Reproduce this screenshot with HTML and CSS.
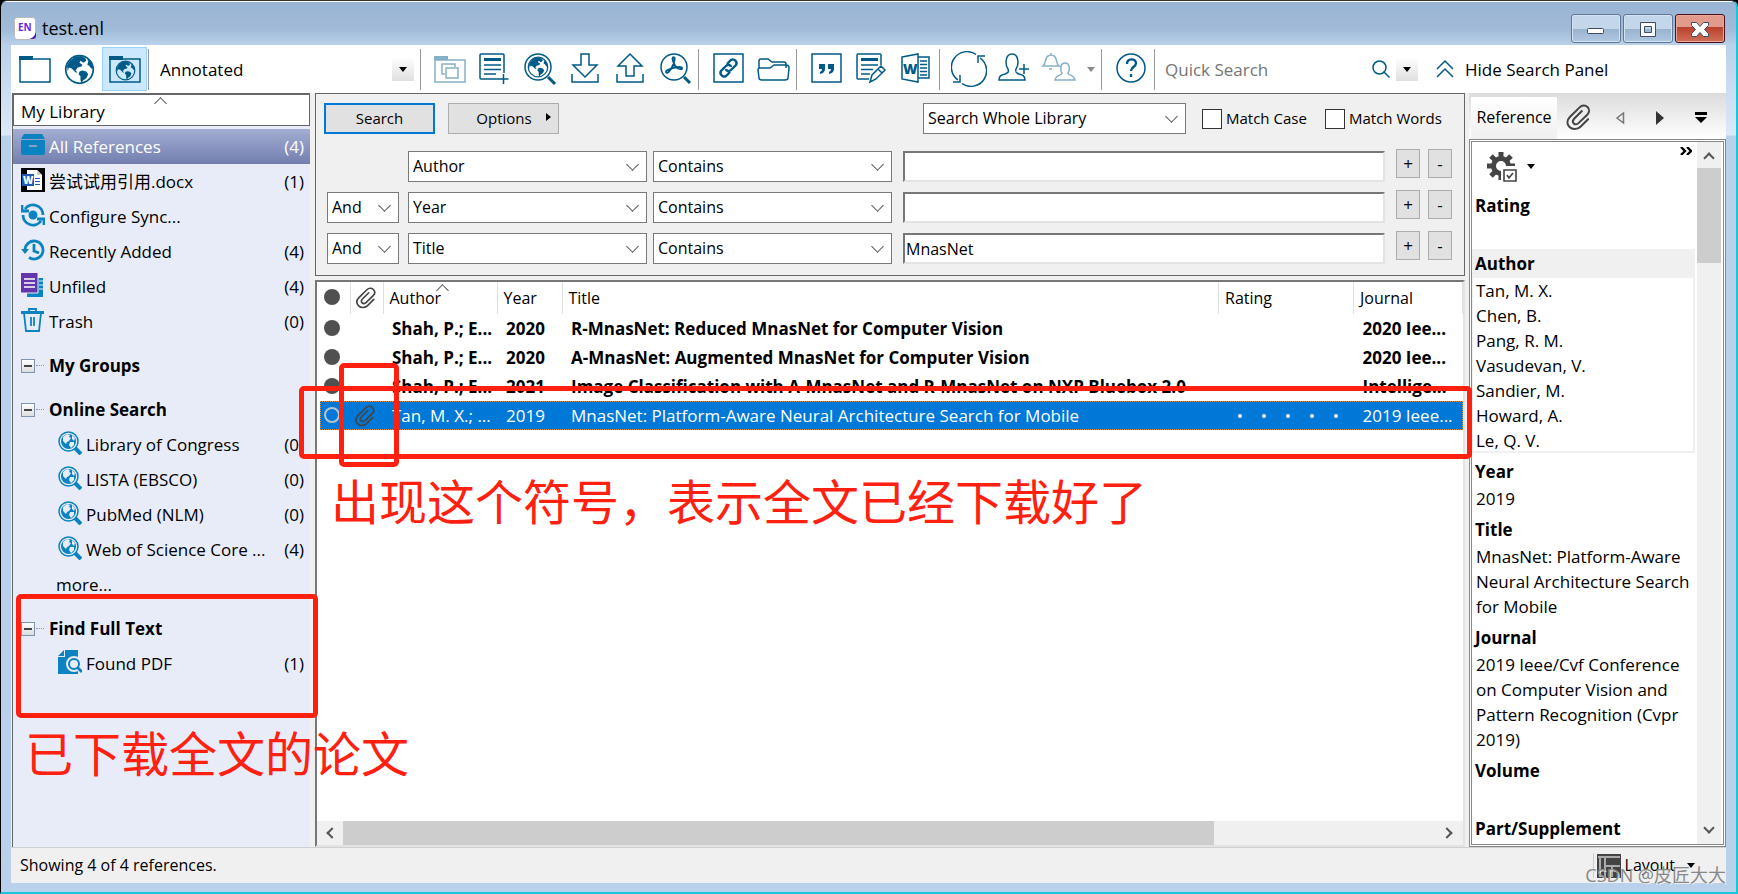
FILE: index.html
```html
<!DOCTYPE html>
<html lang="en">
<head>
    <meta charset="UTF-8">
    <meta name="viewport" content="width=device-width, initial-scale=1.0">
    <title>test.enl</title>
    <link rel="stylesheet" href="styles.css">
</head>
<body>
    <!-- shared icons -->
    <svg class="defs" aria-hidden="true">
        <symbol id="globe" viewBox="0 0 32 32">
            <circle cx="16" cy="16" r="14.2" fill="none" stroke="currentColor" stroke-width="1.8"/>
            <path fill="currentColor" d="M3 12 6 7l5-4 6-1 5 2 1 3-3 2-3-2-1 2 3 2-1 2-4 1-2 3 2 2-2 0-4-4-3-1-1 4zM16 18l3-1 4 1 2 3-2 4-3 2-2 3-1-3 0-4-2-2zM24 5l4 4 2 6-2 0-2-3-2-1 1-3z"/>
        </symbol>
        <symbol id="clip" viewBox="0 0 24 24">
            <path fill="none" stroke="currentColor" stroke-width="1.8" stroke-linecap="round" d="M20.5 13.5 14 20c-3 3-7.5 3-10 .5s-2.5-6 .3-9L13 3c2-2 5-2.300 7-.3s1.800 4.800-.2 6.800L12 17c-1.300 1.300-3 1.500-4.200.3s-1-2.800.3-4.200L15 6.300"/>
        </symbol>
        <symbol id="search-globe" viewBox="0 0 24 24">
            <circle cx="10.500" cy="10.500" r="9.500" fill="none" stroke="currentColor" stroke-width="1.500"/>
            <circle cx="10.500" cy="10.500" r="7.500" fill="currentColor"/>
            <path fill="#e8ecf8" d="M5 6l4-3 3 1-1 2 2 1-2 3-2 1-1 2-3-3zM12 11l4 0 0 3-3 3-2-3zM14 4l3 3-1 3-2-2z"/>
            <path stroke="currentColor" stroke-width="4" d="M17 17l6 6"/>
        </symbol>
    </svg>

    <div class="window">
        <header class="titlebar">
            <svg class="app-icon" viewBox="0 0 22 23">
                <rect x=".5" y=".5" width="21" height="22" rx="3" fill="#fff" stroke="#bbb"/>
                <path d="M22 15v4q0 3-3 3h-4q5-1 7-7" fill="#4a1fb0"/>
                <text x="4" y="14" class="app-icon-text">EN</text>
            </svg>
            <h1>test.enl</h1>
            <div class="window-buttons">
                <button class="win-btn" aria-label="Minimize"><svg viewBox="0 0 48 26"><rect x="15.500" y="12.500" width="16" height="5" rx="1" fill="#fff" stroke="#3f4d63"/></svg></button>
                <button class="win-btn" aria-label="Maximize"><svg viewBox="0 0 48 26"><path fill="#fff" fill-rule="evenodd" stroke="#3f4d63" d="M16.500 6.500h15v14h-15zM20.500 10.500h7v6h-7z"/></svg></button>
                <button class="win-btn close" aria-label="Close"><svg viewBox="0 0 48 26"><path fill="#fff" stroke="#3f4d63" stroke-linejoin="round" d="M15.500 6.500h5l3.500 4 3.500-4h5v3L28.500 13.500l4 4v3h-5l-3.500-4-3.500 4h-5v-3l4-4-4-4z"/></svg></button>
            </div>
        </header>

        <div class="client">
            <nav class="toolbar">
                <button class="tool" aria-label="Local library"><svg viewBox="0 0 36 36"><path class="line" d="M3 31V8h30v23z"/><path d="M2 5h14v4H2z"/></svg></button>
                <button class="tool" aria-label="Online search"><svg class="globe" viewBox="0 0 32 32"><use href="#globe"/></svg></button>
                <button class="tool active" aria-label="Integrated library"><svg viewBox="0 0 36 36"><path class="line" d="M3 31V8h30v23z"/><path d="M2 5h14v4H2z"/><use href="#globe" x="8" y="9" width="21" height="21"/></svg></button>
                <span class="sep"></span>
                <span class="combo style-combo">Annotated<button class="drop" aria-label="Choose style"></button></span>
                <span class="sep"></span>
                <button class="tool dim" aria-label="New group"><svg viewBox="0 0 36 36"><path class="line" d="M3 31V9h30v22z"/><path d="M2 5h14v4H2z"/><path class="line" d="M13 23h-3V13h13v3M14 17h12v10H14z"/></svg></button>
                <button class="tool" aria-label="New reference"><svg viewBox="0 0 36 36"><path class="line" d="M22 28H4q-1 0-1-1V4q0-1 1-1h22q1 0 1 1v18M7 14h17M7 18.500h17M7 23h12M26.500 23v10M21.500 28h10"/><path d="M7 7h17v3H7z"/></svg></button>
                <button class="tool" aria-label="Search online"><svg viewBox="0 0 36 36"><circle class="line" cx="16" cy="16" r="13"/><use href="#globe" x="5" y="5" width="22" height="22"/><path class="thick" d="M26 26l7 7"/></svg></button>
                <button class="tool" aria-label="Import"><svg viewBox="0 0 36 36"><path class="line" d="M14 3h8v11h8L18 26 6 14h8zM5 23v8h26v-8"/></svg></button>
                <button class="tool" aria-label="Export"><svg viewBox="0 0 36 36"><path class="line" d="M18 3l12 12h-8v10h-8V15H6zM5 23v8h26v-8"/></svg></button>
                <button class="tool" aria-label="Find full text"><svg viewBox="0 0 36 36"><circle class="line" cx="17" cy="16" r="13"/><path class="thick" d="M27 26l6 6"/><path class="line mid" d="M15.500 8c0-3 3-2 2 1-1 5-3 9-6 12-2 2-4 0-1-2 4-2 8-3 12-3 4 0 3 3 0 2-4-1-6-5-7-10"/></svg></button>
                <span class="sep"></span>
                <button class="tool" aria-label="Open link"><svg viewBox="0 0 36 36"><path class="line" d="M4 3h29v28H4z"/><path class="line bold" d="M17 13l4-4c3-2 7 2 5 5l-5 5c-2 2-5 1-5-1M20 21l-4 4c-3 2-7-2-5-5l5-5c2-2 5-1 5 1"/></svg></button>
                <button class="tool" aria-label="Open file"><svg viewBox="0 0 36 36"><path class="line" d="M4 17V10q0-2 2-2h7l4 3h12q2 0 2 2v4M5 17h10l4-3h12q3 0 3 3l-1 10q0 2-3 2H7q-3 0-3-2L3 19q0-2 2-2z"/></svg></button>
                <span class="sep"></span>
                <button class="tool" aria-label="Insert citation"><svg viewBox="0 0 36 36"><path class="line" d="M4 3h29v28H4z"/><path d="M11 13h6v5q0 4-5 5v-2q2-1 2-3h-3zM20 13h6v5q0 4-5 5v-2q2-1 2-3h-3z"/></svg></button>
                <button class="tool" aria-label="Format bibliography"><svg viewBox="0 0 36 36"><path class="line" d="M16 28H5q-1 0-1-1V4q0-1 1-1h22q1 0 1 1v10M8 14h17M8 18.500h12M8 23h9M17 31l2-7L28 15l4 4-9 9zM25 18l4 4"/><path d="M8 7h17v3H8z"/></svg></button>
                <button class="tool" aria-label="Go to Word"><svg viewBox="0 0 36 36"><path class="line" d="M4 6l16-3v28L4 28zM20 6h11v21H20M22 10h7M22 13.500h7M22 17h7M22 20.500h7M22 24h7"/><text x="5" y="23" class="word-letter">W</text></svg></button>
                <span class="sep"></span>
                <button class="tool" aria-label="Sync"><svg viewBox="0 0 36 36"><path class="line" d="M7 29A15.500 15.500 0 0 1 25 3.500M29 7A15.500 15.500 0 0 1 11 32.500M34 5h-7v7M2 31h7v-7"/></svg></button>
                <button class="tool" aria-label="Share library"><svg viewBox="0 0 36 36"><path class="line" d="M12 18C9 14 9 3 16 3s7 11 4 15c-1 3 0 4 3 5 4 1 6 2 6 6H3c0-4 2-5 6-6 3-1 4-2 3-5zM28 13v10M23 18h10"/></svg></button>
                <button class="tool dim" aria-label="Activity feed"><svg viewBox="0 0 36 36"><path class="line" d="M2 15c3-2 2-9 5-10 2-1 5-1 6 0 3 1 2 8 5 10zM8 18h3M10 4V2M21 22c-2-3-2-10 3-10s5 7 3 10c0 3 6 1 7 7H14c1-6 7-4 7-7z"/></svg></button>
                <span class="tool-arrow"></span>
                <span class="sep"></span>
                <button class="tool" aria-label="Help"><svg viewBox="0 0 36 36"><circle class="line" cx="18" cy="17" r="14"/><path class="line bold" d="M14 13c0-6 9-6 9-1 0 4-5 4-5 8M18 23v3"/></svg></button>
                <span class="sep"></span>
                <div class="quick">
                    <input type="text" placeholder="Quick Search" aria-label="Quick Search">
                    <svg class="lens" viewBox="0 0 18 18"><path class="line" d="M11.500 11.500l6 6"/><circle class="line" cx="7.500" cy="7.500" r="6.500"/></svg>
                    <button class="drop" aria-label="Search options"></button>
                </div>
                <button class="hide-panel"><svg viewBox="0 0 18 18"><path class="line" d="M1 9l8-8 8 8M1 17l8-8 8 8"/></svg>Hide Search Panel</button>
            </nav>

            <main class="main">
                <aside class="sidebar">
                    <div class="side-head">My Library</div>
                    <ul class="groups">
                        <li class="selected"><svg viewBox="0 0 24 24"><path d="M3 1h18l3 5H0zM0 7h24v13q0 2-2 2H2q-2 0-2-2z"/><path d="M8 13h8" stroke="#8d9bc5" stroke-width="2"/></svg><span class="name">All References</span><span>(4)</span></li>
                        <li><svg viewBox="0 0 24 24"><path fill="#000" d="M0 0h24v24H0z"/><path fill="#fff" d="M6 2h10l5 5v15H6z"/><path fill="#ccc" d="M16 2v5h5z"/><path fill="#1f5bb5" d="M1 6h12v12H1zM14 10h5v1h-5zM14 13h5v1h-5zM14 16h5v1h-5z"/><text x="2" y="16" class="doc-letter">W</text></svg><span class="name">尝试试用引用.docx</span><span>(1)</span></li>
                        <li><svg viewBox="0 0 24 24"><circle cx="12" cy="12" r="4.500"/><path class="ring" d="M4 6A10 10 0 0 1 22 12M20 18A10 10 0 0 1 2 12M1 2v6h7M23 22v-6h-7"/></svg><span class="name">Configure Sync...</span></li>
                        <li><svg viewBox="0 0 24 24"><path class="ring" d="M4 12a9 9 0 1 1 4 7.500M13 6v7l5 2"/><path d="M0 11h8l-4 5z"/></svg><span class="name">Recently Added</span><span>(4)</span></li>
                        <li><svg viewBox="0 0 24 24"><path d="M6 5h16v19H6z"/><path stroke="#e8ecf8" d="M18 8h5M18 12h5M18 16h5"/><path fill="#6235a8" stroke="#e8ecf8" stroke-width="1" d="M-1-1h18v21H-1z"/><path stroke="#fff" stroke-width="1.500" d="M3 6h11M3 10h11M3 14h11"/></svg><span class="name">Unfiled</span><span>(4)</span></li>
                        <li><svg viewBox="0 0 24 24"><path class="ring thin" d="M3 5l2 18h13l2-18M8 3V1h7v2M10 9v9M13 9v9"/><path d="M0 3h23v3H0z"/></svg><span class="name">Trash</span><span>(0)</span></li>
                        <li class="heading"><button class="toggle" aria-label="Collapse My Groups"></button>My Groups</li>
                        <li class="heading"><button class="toggle" aria-label="Collapse Online Search"></button>Online Search</li>
                        <li class="child"><svg viewBox="0 0 24 24"><use href="#search-globe"/></svg><span class="name">Library of Congress</span><span>(0)</span></li>
                        <li class="child"><svg viewBox="0 0 24 24"><use href="#search-globe"/></svg><span class="name">LISTA (EBSCO)</span><span>(0)</span></li>
                        <li class="child"><svg viewBox="0 0 24 24"><use href="#search-globe"/></svg><span class="name">PubMed (NLM)</span><span>(0)</span></li>
                        <li class="child"><svg viewBox="0 0 24 24"><use href="#search-globe"/></svg><span class="name">Web of Science Core ...</span><span>(4)</span></li>
                        <li class="more"><a href="#">more...</a></li>
                        <li class="heading"><button class="toggle" aria-label="Collapse Find Full Text"></button>Find Full Text</li>
                        <li class="child"><svg viewBox="0 0 24 24"><path d="M0 6l6-6v6zM7 0h13v24H0V7h7z"/><circle cx="16" cy="14" r="7" fill="#0a83c0" stroke="#e8ecf8" stroke-width="2"/><circle cx="16" cy="14" r="4" fill="#e8ecf8"/><path class="ring" d="M19 17l5 5"/></svg><span class="name">Found PDF</span><span>(1)</span></li>
                    </ul>
                </aside>

                <section class="center">
                    <form class="search-panel">
                        <div class="search-top">
                            <button type="button" class="btn primary">Search</button>
                            <button type="button" class="btn options">Options<i></i></button>
                            <span class="select scope"><select aria-label="Search scope"><option>Search Whole Library</option></select></span>
                            <label><input type="checkbox">Match Case</label>
                            <label><input type="checkbox">Match Words</label>
                        </div>
                        <div class="criterion">
                            <span class="bool"></span>
                            <span class="select"><select aria-label="Field 1"><option>Author</option></select></span>
                            <span class="select"><select aria-label="Comparison 1"><option>Contains</option></select></span>
                            <input type="text" aria-label="Value 1">
                            <button type="button" class="mini">+</button>
                            <button type="button" class="mini">-</button>
                        </div>
                        <div class="criterion">
                            <span class="select bool"><select aria-label="Operator 2"><option>And</option></select></span>
                            <span class="select"><select aria-label="Field 2"><option>Year</option></select></span>
                            <span class="select"><select aria-label="Comparison 2"><option>Contains</option></select></span>
                            <input type="text" aria-label="Value 2">
                            <button type="button" class="mini">+</button>
                            <button type="button" class="mini">-</button>
                        </div>
                        <div class="criterion">
                            <span class="select bool"><select aria-label="Operator 3"><option>And</option></select></span>
                            <span class="select"><select aria-label="Field 3"><option>Title</option></select></span>
                            <span class="select"><select aria-label="Comparison 3"><option>Contains</option></select></span>
                            <input type="text" value="MnasNet" aria-label="Value 3">
                            <button type="button" class="mini">+</button>
                            <button type="button" class="mini">-</button>
                        </div>
                    </form>

                    <div class="list">
                        <table>
                            <thead>
                                <tr>
                                    <th class="c-read"><span class="dot"></span></th>
                                    <th class="c-clip"><svg class="clip" viewBox="0 0 24 24"><use href="#clip"/></svg></th>
                                    <th class="c-author">Author</th>
                                    <th class="c-year">Year</th>
                                    <th>Title</th>
                                    <th class="c-rating">Rating</th>
                                    <th class="c-journal">Journal</th>
                                </tr>
                            </thead>
                            <tbody>
                                <tr class="unread">
                                    <td><span class="dot"></span></td><td></td><td>Shah, P.; E...</td><td>2020</td>
                                    <td>R-MnasNet: Reduced MnasNet for Computer Vision</td><td></td><td>2020 Iee...</td>
                                </tr>
                                <tr class="unread">
                                    <td><span class="dot"></span></td><td></td><td>Shah, P.; E...</td><td>2020</td>
                                    <td>A-MnasNet: Augmented MnasNet for Computer Vision</td><td></td><td>2020 Iee...</td>
                                </tr>
                                <tr class="unread">
                                    <td><span class="dot"></span></td><td></td><td>Shah, P.; E...</td><td>2021</td>
                                    <td>Image Classification with A-MnasNet and R-MnasNet on NXP Bluebox 2.0</td><td></td><td>Intellige...</td>
                                </tr>
                                <tr class="current">
                                    <td><span class="dot"></span></td><td><svg class="clip" viewBox="0 0 24 24"><use href="#clip"/></svg></td><td>Tan, M. X.; ...</td><td>2019</td>
                                    <td>MnasNet: Platform-Aware Neural Architecture Search for Mobile</td>
                                    <td><span class="stars"><i></i><i></i><i></i><i></i><i></i></span></td><td>2019 Ieee...</td>
                                </tr>
                            </tbody>
                        </table>
                        <div class="hscroll"><b class="chev left"></b><span class="thumb"></span><b class="chev right"></b></div>
                    </div>
                </section>

                <aside class="details">
                    <div class="tabs">
                        <button class="tab">Reference</button>
                        <svg class="tab-clip" viewBox="0 0 24 24"><use href="#clip"/></svg>
                        <svg class="tab-arrow" viewBox="0 0 10 14"><path fill="none" stroke="#777" stroke-width="1.500" d="M8.500 2v10L2 7z"/></svg>
                        <svg class="tab-arrow" viewBox="0 0 10 14"><path fill="#333" d="M1 0v14l8-7z"/></svg>
                        <svg class="tab-menu" viewBox="0 0 12 12"><path d="M0 0h12v3H0zM0 5h12l-6 6z"/></svg>
                    </div>
                    <div class="details-box">
                        <div class="fields">
                            <div class="gear-row">
                                <svg class="gear" viewBox="0 0 30 30"><circle cx="14" cy="14" r="7.500" fill="none" stroke="#444" stroke-width="5"/><path stroke="#444" stroke-width="5" d="M14 0v5M0 14h5M14 23v5M23 14h5M4 4l4 4M24 4l-4 4M4 24l4-4"/><path fill="#fff" d="M14 14h16v16H14z"/><path fill="none" stroke="#444" stroke-width="1.600" d="M17 18h12v11H17zM20 23l2 3 4-5"/></svg>
                                <i class="down"></i>
                                <svg class="expand" viewBox="0 0 12 8"><path class="line bold" d="M1 0l4 4-4 4M7 0l4 4-4 4"/></svg>
                            </div>
                            <dl>
                                <dt>Rating</dt>
                                <dd></dd>
                                <dt class="focus">Author</dt>
                                <dd class="focus">Tan, M. X.<br>Chen, B.<br>Pang, R. M.<br>Vasudevan, V.<br>Sandier, M.<br>Howard, A.<br>Le, Q. V.</dd>
                                <dt>Year</dt>
                                <dd>2019</dd>
                                <dt>Title</dt>
                                <dd>MnasNet: Platform-Aware Neural Architecture Search for Mobile</dd>
                                <dt>Journal</dt>
                                <dd>2019 Ieee/Cvf Conference on Computer Vision and Pattern Recognition (Cvpr 2019)</dd>
                                <dt>Volume</dt>
                                <dd></dd>
                                <dt>Part/Supplement</dt>
                            </dl>
                        </div>
                        <div class="vscroll"><b class="chev up"></b><span class="thumb"></span><b class="chev bottom"></b></div>
                    </div>
                </aside>
            </main>

            <footer class="status">
                <span>Showing 4 of 4 references.</span>
                <button class="layout"><svg viewBox="0 0 24 24"><path fill="#444" d="M0 0h24v24H0z"/><path stroke="#ccc" stroke-width="1.500" fill="none" d="M1 3h22M8 4v19M3 4v19M9 12h14M15 13v10"/></svg>Layout<i class="down"></i></button>
            </footer>
        </div>

        <!-- notes drawn over the window -->
        <div class="mark mark-row"></div>
        <div class="mark mark-clip"></div>
        <div class="mark mark-pdf"></div>
        <p class="note note-row">出现这个符号，表示全文已经下载好了</p>
        <p class="note note-pdf">已下载全文的论文</p>
        <p class="watermark">CSDN @皮匠大大</p>
    </div>
</body>
</html>
```
FILE: styles.css
```css
* {
    margin: 0;
    padding: 0;
    box-sizing: border-box;
}

body {
    height: 100vh;
    overflow: hidden;
    background: #000;
    font-family: "Open Sans", "Noto Sans CJK SC", sans-serif;
    font-size: 17px;
    line-height: 25px;
    color: #000;
}

button, input, select {
    font: inherit;
    color: inherit;
    border: 0;
    background: none;
}

.defs {
    position: absolute;
    width: 0;
    height: 0;
}

.line {
    fill: none;
    stroke: currentColor;
    stroke-width: 1.5;
}

.line.mid {
    stroke-width: 1.8;
}

.line.bold {
    stroke-width: 2.4;
}

.thick {
    stroke: currentColor;
    stroke-width: 3;
}

/* Window frame */
.window {
    position: relative;
    display: flex;
    flex-direction: column;
    height: 100vh;
    padding: 1px 10px 9px 10px;
    border: 1px solid #000;
    border-top-color: #333;
    border-right: 2px solid #19c5dc;
    border-bottom: 2px solid #19c5dc;
    border-radius: 7px 7px 0 0;
    background: linear-gradient(#fff 1px, #9ab4d4 1px, #a0bad7 28px, #b9d1ea 44px, #dce9f8 134px, #b9d1ea 135px);
}

.titlebar {
    display: flex;
    align-items: center;
    flex: none;
    height: 43px;
    padding: 10px 1px 0 3px;
    gap: 6px;
}

.app-icon {
    width: 22px;
    height: 23px;
}

.app-icon-text {
    font-size: 10px;
    font-weight: 700;
    fill: #6a2be0;
}

h1 {
    font-size: 18px;
    font-weight: 400;
}

.window-buttons {
    display: flex;
    gap: 2px;
    margin-left: auto;
}

.win-btn {
    width: 50px;
    height: 29px;
    border: 1px solid #5f7896;
    border-radius: 3px;
    box-shadow: inset 0 0 0 1px #d4e2f1;
    background: linear-gradient(#c3d6ea 50%, #98b1cd 50%, #b0c8e2);
}

.win-btn svg {
    display: block;
    width: 48px;
    height: 26px;
}

.win-btn.close {
    border-color: #4b1018;
    box-shadow: inset 0 0 0 1px #e8a99c;
    background: linear-gradient(#e29a8b 45%, #b9402b 45%, #d1705a);
}

.client {
    display: flex;
    flex-direction: column;
    flex: 1;
    min-height: 0;
    background: #f0f0f0;
}

/* Toolbar */
.toolbar {
    display: flex;
    align-items: center;
    flex: none;
    height: 48px;
    padding-left: 1px;
    background: #fff;
}

.tool {
    display: flex;
    align-items: center;
    justify-content: center;
    flex: none;
    width: 45px;
    height: 44px;
    color: #005a87;
}

.tool svg {
    width: 36px;
    height: 36px;
    fill: currentColor;
}

.tool svg.globe {
    width: 31px;
    height: 31px;
}

.tool.active {
    background: #cce8ff;
    border: 1px solid #99d1ff;
}

.tool.dim {
    color: #86b0c6;
}

.word-letter {
    font-size: 14px;
    font-weight: 800;
}

.sep {
    flex: none;
    width: 1px;
    height: 41px;
    margin: 0 6px 0 1px;
    background: #999;
}

.combo {
    display: flex;
    align-items: center;
    justify-content: space-between;
    flex: none;
}

.style-combo {
    width: 264px;
    padding: 0 5px;
}

.drop {
    display: flex;
    align-items: center;
    justify-content: center;
    width: 22px;
    height: 24px;
    background: linear-gradient(#fff, #e0e0e0);
}

.drop::after, .down, .tool-arrow::after {
    content: "";
    border: 4px solid transparent;
    border-top: 5px solid #000;
    border-bottom: 0;
}

.tool-arrow {
    display: flex;
    width: 19px;
    padding-left: 6px;
}

.tool-arrow::after {
    border-top-color: #888;
}

.quick {
    display: flex;
    align-items: center;
    flex: none;
    width: 257px;
    padding-left: 4px;
}

.quick input {
    flex: 1;
    min-width: 0;
}

.quick input::placeholder {
    color: #757575;
    opacity: 1;
}

.lens {
    width: 18px;
    height: 18px;
    margin-right: 6px;
    color: #005a87;
}

.hide-panel {
    display: flex;
    align-items: center;
    gap: 11px;
    margin-left: 18px;
    white-space: nowrap;
}

.hide-panel svg {
    width: 18px;
    height: 18px;
    color: #005a87;
}

.main {
    display: flex;
    flex: 1;
    min-height: 0;
}

/* Group list */
.sidebar {
    flex: none;
    width: 298px;
    margin-left: 1px;
    border-left: 1px solid #666;
    background: #e8ecf8;
}

.side-head {
    position: relative;
    height: 33px;
    padding: 4px 7px 0;
    border: 1px solid #666;
    border-top-width: 2px;
    background: #fff;
}

.side-head::after, .c-author::after {
    content: "";
    position: absolute;
    left: 48%;
    top: 4px;
    width: 8px;
    height: 8px;
    border: solid #555;
    border-width: 1px 0 0 1px;
    transform: rotate(45deg);
}

.groups {
    padding-top: 3px;
    list-style: none;
}

.groups li {
    display: flex;
    align-items: center;
    height: 35px;
    padding: 0 6px 0 8px;
    gap: 4px;
}

.groups svg {
    flex: none;
    width: 24px;
    height: 24px;
    margin-bottom: 3px;
    fill: #0a83c0;
    color: #0a83c0;
}

.groups .name {
    flex: 1;
    white-space: nowrap;
}

.ring {
    fill: none;
    stroke: #0a83c0;
    stroke-width: 2.8;
}

.ring.thin {
    stroke-width: 1.8;
}

.doc-letter {
    font-size: 10px;
    font-weight: 800;
    fill: #fff;
}

.groups .selected {
    color: #fff;
    background: linear-gradient(#a3aed3, #727eae);
}

.groups .child {
    padding-left: 45px;
}

.groups .more {
    padding-left: 43px;
}

.more a {
    color: inherit;
    text-decoration: none;
}

.groups .heading {
    margin-top: 9px;
    font-weight: 700;
}

.toggle {
    position: relative;
    width: 24px;
    height: 14px;
    background: linear-gradient(#444, #444) 3px 6px / 8px 2px no-repeat,
        linear-gradient(#fff, #ddd) 1px 1px / 12px 12px no-repeat,
        linear-gradient(#7d93b2, #7d93b2) 0 0 / 14px 14px no-repeat;
}

.toggle::after {
    content: "";
    position: absolute;
    right: 1px;
    top: 6px;
    width: 8px;
    border-top: 1px dotted #8a96b0;
}

/* Search panel */
.center {
    display: flex;
    flex-direction: column;
    flex: 1;
    min-width: 0;
    margin-left: 5px;
}

.search-panel {
    flex: none;
    height: 183px;
    padding: 8px 10px 0 8px;
    border: 1px solid #666;
}

.search-top {
    display: flex;
    align-items: center;
    height: 33px;
    margin-bottom: 16px;
    font-size: 15px;
}

.btn {
    flex: none;
    width: 111px;
    height: 31px;
    margin-right: 13px;
    border: 1px solid #adadad;
    background: #e1e1e1;
}

.btn.primary {
    border: 2px solid #0078d7;
}

.btn.options {
    padding-left: 20px;
}

.btn i {
    display: inline-block;
    margin-left: 14px;
    border: 4px solid transparent;
    border-left: 5px solid #000;
    border-right: 0;
    vertical-align: 3px;
}

.search-top label {
    display: flex;
    align-items: center;
    gap: 4px;
    width: 107px;
    margin-left: 16px;
    white-space: nowrap;
}

.search-top label:last-child {
    width: 129px;
}

.search-top input {
    appearance: none;
    flex: none;
    width: 20px;
    height: 20px;
    border: 1px solid #333;
    background: #fff;
}

.select {
    position: relative;
    flex: none;
    width: 239px;
    height: 31px;
}

.select select {
    appearance: none;
    width: 100%;
    height: 100%;
    padding: 0 4px;
    border: 1px solid #7a7a7a;
    background: #fff;
    font-size: 16px;
}

.select::after {
    content: "";
    position: absolute;
    right: 10px;
    top: 9px;
    width: 8px;
    height: 8px;
    border: solid #555;
    border-width: 0 1px 1px 0;
    transform: rotate(45deg);
    pointer-events: none;
}

.select.scope {
    width: 263px;
    margin-left: auto;
}

.criterion {
    display: flex;
    gap: 6px;
    height: 31px;
    margin: 0 0 10px 3px;
}

.criterion .bool {
    width: 72px;
    margin-right: 3px;
}

.criterion input {
    flex: 1;
    min-width: 0;
    margin: 0 5px;
    padding: 2px 1px 0;
    border: 2px solid #e3e3e3;
    border-top-color: #777;
    border-left-color: #777;
    background: #fff;
    font-size: 16px;
}

.mini {
    width: 24px;
    height: 29px;
    margin: -2px 2px 0 0;
    border: 1px solid #adadad;
    background: #e1e1e1;
    line-height: 20px;
}

/* Reference list */
.list {
    display: flex;
    flex-direction: column;
    flex: 1;
    min-height: 0;
    margin-top: 4px;
    border: 2px solid #e3e3e3;
    border-top-color: #777;
    border-left-color: #777;
    background: #fff;
}

table {
    width: calc(100% - 3px);
    margin-left: 3px;
    table-layout: fixed;
    border-collapse: collapse;
    font-size: 17px;
}

th {
    position: relative;
    height: 32px;
    padding-left: 6px;
    border-right: 1px solid #e0e0e0;
    font-size: 16px;
    font-weight: 400;
    text-align: left;
}

td {
    height: 29px;
    padding-left: 9px;
    white-space: nowrap;
    overflow: hidden;
}

th:first-child, td:first-child, th:nth-child(2), td:nth-child(2) {
    padding: 0 0 0 4px;
}

.c-read {
    width: 30px;
}

.c-clip {
    width: 33px;
}

.c-author {
    width: 114px;
}

.c-year {
    width: 65px;
}

.c-rating {
    width: 135px;
}

.c-journal {
    width: 109px;
}

.dot {
    display: block;
    width: 16px;
    height: 16px;
    margin-bottom: 2px;
    border-radius: 50%;
    background: #505050;
}

.clip {
    display: block;
    width: 22px;
    height: 22px;
    color: #444;
}

.unread {
    font-weight: 700;
}

.current {
    color: #fff;
    background: #0078d7;
    outline: 1px dotted #d98b4a;
    outline-offset: -1px;
}

.current .dot {
    border: 2px solid #b8c4d0;
    background: none;
}

.stars {
    display: flex;
    gap: 20px;
    padding-left: 10px;
}

.stars i {
    width: 4px;
    height: 4px;
    border-radius: 50%;
    background: #fff;
}

.hscroll {
    display: flex;
    align-items: center;
    height: 24px;
    margin-top: auto;
    background: #f0f0f0;
}

.hscroll .thumb {
    width: 76%;
    height: 24px;
    background: #cdcdcd;
}

.chev {
    width: 8px;
    height: 8px;
    margin: 8px;
    border: solid #555;
    border-width: 2px 0 0 2px;
    transform: rotate(-45deg);
}

.chev.left {
    margin-right: 7px;
    margin-left: 11px;
}

.chev.right {
    margin-left: auto;
    margin-right: 12px;
    transform: rotate(135deg);
}

.chev.up {
    margin: 12px 0 6px;
    transform: rotate(45deg);
}

.chev.bottom {
    margin: auto 0 12px;
    transform: rotate(225deg);
}

/* Reference details */
.details {
    display: flex;
    flex-direction: column;
    flex: none;
    width: 257px;
    margin-left: 4px;
}

.tabs {
    display: flex;
    align-items: center;
    height: 46px;
    padding: 3px 19px 0 2px;
    background: linear-gradient(#dcdcdc, #fff);
}

.tab {
    width: 86px;
    height: 42px;
    background: linear-gradient(#fff, #f0f0f0);
    font-size: 16px;
}

.tab-clip {
    width: 27px;
    height: 27px;
    margin: 0 auto 0 8px;
    color: #444;
}

.tab-arrow {
    width: 10px;
    height: 14px;
    margin-right: 30px;
}

.tab-menu {
    width: 12px;
    height: 12px;
}

.details-box {
    display: flex;
    flex: 1;
    min-height: 0;
    padding-right: 2px;
    border: 3px double #888;
    background: #fff;
}

.fields {
    flex: 1;
    min-width: 0;
    overflow: hidden;
}

.gear-row {
    display: flex;
    align-items: center;
    gap: 10px;
    height: 49px;
    padding-left: 15px;
}

.gear {
    width: 30px;
    height: 30px;
}

.expand {
    width: 12px;
    height: 8px;
    align-self: flex-start;
    margin: 5px 5px 0 auto;
}

dt {
    padding-left: 3px;
    font-weight: 700;
    line-height: 29px;
}

dd {
    min-height: 25px;
    margin-bottom: 4px;
    padding: 0 6px 0 4px;
}

dt.focus {
    margin-right: 2px;
    background: #f0f0f0;
}

dd.focus {
    margin-right: 2px;
    box-shadow: inset -2px -2px #f0f0f0, inset 1px 0 #f0f0f0;
}

.vscroll {
    display: flex;
    flex-direction: column;
    align-items: center;
    width: 24px;
    background: #f0f0f0;
}

.vscroll .thumb {
    width: 24px;
    height: 95px;
    background: #cdcdcd;
}

.status {
    display: flex;
    align-items: center;
    justify-content: space-between;
    flex: none;
    height: 36px;
    padding: 0 31px 0 9px;
    border-top: 1px solid #d0d0d0;
    font-size: 16px;
}

.layout {
    display: flex;
    align-items: center;
    gap: 4px;
    padding-left: 3px;
    border-left: 1px solid #ccc;
}

.layout svg {
    width: 24px;
    height: 24px;
}

.layout .down {
    margin-left: 8px;
}

/* Red marks and notes */
.mark {
    position: absolute;
    border: 5px solid #ff2010;
    border-radius: 5px;
    pointer-events: none;
}

.mark-row {
    left: 298px;
    right: 264px;
    top: 385px;
    height: 73px;
}

.mark-clip {
    left: 338px;
    top: 362px;
    width: 60px;
    height: 104px;
}

.mark-pdf {
    left: 15px;
    top: 593px;
    width: 302px;
    height: 124px;
}

.note {
    position: absolute;
    font-family: "Noto Sans CJK SC", sans-serif;
    font-size: 48px;
    line-height: 60px;
    color: #ff2010;
    white-space: nowrap;
    pointer-events: none;
}

.note-row {
    left: 330px;
    top: 468px;
}

.note-pdf {
    left: 24px;
    top: 720px;
}

.watermark {
    position: absolute;
    right: 10px;
    bottom: 4px;
    font-size: 18px;
    color: #888;
    text-shadow: 1px 1px #eee;
}
```
